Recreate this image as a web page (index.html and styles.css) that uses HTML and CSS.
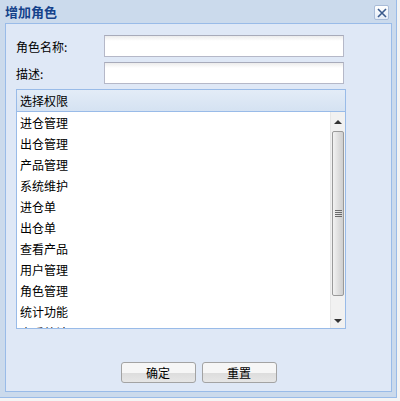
FILE: index.html
```html
<!DOCTYPE html>
<html lang="zh">
<head>
  <meta charset="UTF-8">
  <title>增加角色</title>
  <link rel="stylesheet" href="styles.css">
</head>
<body>
  <div class="window">
    <div class="win-header">
      <span class="win-title">增加角色</span>
      <span class="win-close">
        <svg width="10" height="10" viewBox="0 0 10 10"><path d="M1 1L9 9M9 1L1 9" stroke="#3a5a8c" stroke-width="1.6"/></svg>
      </span>
    </div>

    <div class="win-body">
      <div class="form-row">
        <label>角色名称:</label>
        <input class="text-field" type="text">
      </div>
      <div class="form-row">
        <label>描述:</label>
        <input class="text-field" type="text">
      </div>

      <div class="perm-box">
        <div class="perm-header">选择权限</div>
        <div class="perm-body">
          <ul class="perm-list">
            <li>进仓管理</li>
            <li>出仓管理</li>
            <li>产品管理</li>
            <li>系统维护</li>
            <li>进仓单</li>
            <li>出仓单</li>
            <li>查看产品</li>
            <li>用户管理</li>
            <li>角色管理</li>
            <li>统计功能</li>
            <li>查看统计</li>
          </ul>
          <div class="scrollbar">
            <div class="scroll-btn"><span class="arrow-up"></span></div>
            <div class="scroll-thumb"><span class="grip"></span></div>
            <div class="scroll-btn"><span class="arrow-down"></span></div>
          </div>
        </div>
      </div>

      <div class="buttons">
        <button class="btn">确定</button>
        <button class="btn">重置</button>
      </div>
    </div>
  </div>
</body>
</html>
```

FILE: styles.css
```css
* {
  margin: 0;
  padding: 0;
  box-sizing: border-box;
}

body {
  font-family: "Noto Sans CJK SC", "DejaVu Sans", sans-serif;
  font-size: 12px;
  color: #000;
  background: #f4f4f4;
}

.window {
  width: 397px;
  height: 398px;
  background: #cbdaec;
  border-right: 1px solid #99bbe8;
  border-bottom: 1px solid #99bbe8;
  padding: 0 4px 5px 5px;
  display: flex;
  flex-direction: column;
}

.win-header {
  height: 23px;
  display: flex;
  align-items: center;
  justify-content: space-between;
}

.win-title {
  font-size: 13px;
  font-weight: bold;
  color: #15428b;
  line-height: 1;
}

.win-close {
  width: 15px;
  height: 15px;
  border: 1px solid #a9bcd8;
  border-radius: 2px;
  background: linear-gradient(#ffffff, #e4ecf7);
  display: flex;
  align-items: center;
  justify-content: center;
  margin-right: 3px;
  margin-top: 2px;
}

.win-body {
  flex: 1;
  background: #dfe8f6;
  border: 1px solid #99bbe8;
  padding: 11px 0 0 10px;
}

.form-row {
  display: flex;
  align-items: center;
  margin-bottom: 5px;
}

.form-row label {
  width: 88px;
  padding-left: -1px;
}

.text-field {
  width: 240px;
  height: 22px;
  border: 1px solid #b5b8c8;
  border-top-color: #a8abba;
  background: linear-gradient(#ececec, #ffffff 5px);
  outline: none;
}

.perm-box {
  width: 330px;
  border: 1px solid #99bbe8;
  margin-top: 1px;
}

.perm-header {
  height: 22px;
  line-height: 22px;
  padding-left: 3px;
  background: linear-gradient(#e3ecf7, #d5e2f2);
  border-bottom: 1px solid #99bbe8;
}

.perm-body {
  display: flex;
  height: 216px;
  background: #fff;
}

.perm-list {
  flex: 1;
  list-style: none;
  overflow: hidden;
  padding-left: 3px;
}

.perm-list li {
  height: 21px;
  line-height: 21px;
}

.scrollbar {
  width: 15px;
  display: flex;
  flex-direction: column;
  background: #f1f1f1;
  border-left: 1px solid #e6e6e6;
}

.scroll-btn {
  height: 19px;
  display: flex;
  align-items: center;
  justify-content: center;
}

.scroll-btn:last-child {
  height: auto;
  flex: 1;
  align-items: flex-end;
  padding-bottom: 5px;
}

.arrow-up {
  border-left: 4px solid transparent;
  border-right: 4px solid transparent;
  border-bottom: 4px solid #333;
}

.arrow-down {
  border-left: 4px solid transparent;
  border-right: 4px solid transparent;
  border-top: 4px solid #333;
}

.scroll-thumb {
  height: 165px;
  margin: 0 1px;
  border: 1px solid #9a9a9a;
  border-radius: 2px;
  background: linear-gradient(to right, #f2f2f2, #dcdcdc 60%, #cfcfcf);
  display: flex;
  align-items: center;
  justify-content: center;
}

.grip {
  width: 7px;
  height: 7px;
  background: repeating-linear-gradient(#6a6a6a 0 1px, transparent 1px 2px);
}

.buttons {
  display: flex;
  justify-content: center;
  gap: 6px;
  margin-top: 33px;
  padding-right: 10px;
}

.btn {
  width: 75px;
  height: 21px;
  font-family: inherit;
  font-size: 12px;
  color: #000;
  border: 1px solid #a3a3a3;
  border-radius: 3px;
  background: linear-gradient(#f6f6f6 0, #f6f6f6 50%, #dddddd 55%, #e6e6e6 100%);
  cursor: pointer;
}
```
